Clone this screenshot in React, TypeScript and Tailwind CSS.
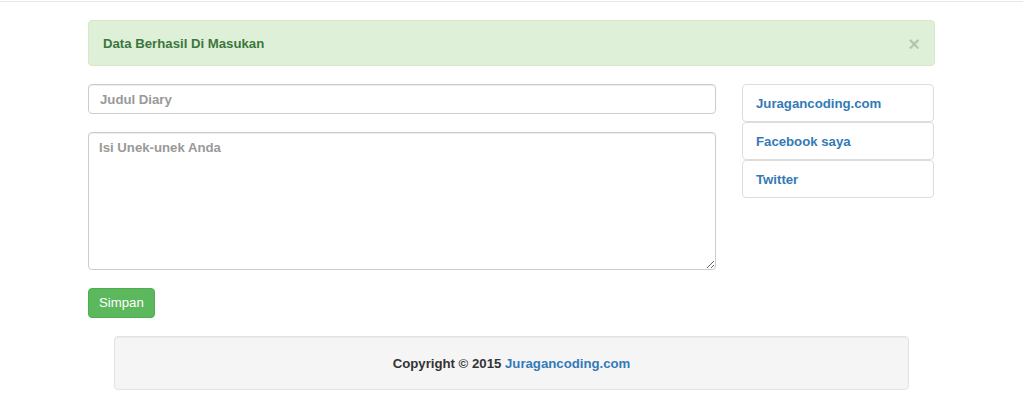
import React from "react";

const links = ["Juragancoding.com", "Facebook saya", "Twitter"];

export default function App() {
  return (
    <div className="min-h-[397px] bg-white font-['Liberation_Sans',Arial,sans-serif] text-[13.2px] font-bold text-[#333]">
      <div className="h-[2px] border-b border-[#e7e7e7]" />

      <div className="mx-auto w-[847px] pt-[18px]">
        {/* Alert */}
        <div className="flex h-[46px] items-center justify-between rounded-[4px] border border-[#d6e9c6] bg-[#dff0d8] pl-[14px] pr-[14px] pt-[2px] text-[#3c763d]">
          <span>Data Berhasil Di Masukan</span>
          <span className="text-[20px] leading-none text-black/20">×</span>
        </div>

        <div className="mt-[18px] flex gap-[26px]">
          {/* Form */}
          <div className="w-[628px]">
            <input
              type="text"
              placeholder="Judul Diary"
              className="block h-[30px] w-full rounded-[4px] border border-[#ccc] px-[11px] font-bold shadow-[inset_0_1px_1px_rgba(0,0,0,0.075)] outline-none placeholder:text-[#999]"
            />
            <textarea
              placeholder="Isi Unek-unek Anda"
              className="mt-[18px] block h-[138px] w-full rounded-[4px] border border-[#ccc] px-[10px] py-[5px] font-bold leading-[20px] shadow-[inset_0_1px_1px_rgba(0,0,0,0.075)] outline-none placeholder:text-[#999]"
            />
            <button className="mt-[18px] h-[30px] rounded-[4px] border border-[#4cae4c] bg-[#5cb85c] px-[10px] font-normal text-white">
              Simpan
            </button>
          </div>

          {/* Links */}
          <div className="flex w-[192px] flex-col">
            {links.map((l) => (
              <a
                key={l}
                href="#"
                className="flex h-[38px] items-center rounded-[4px] border border-[#ddd] pl-[13px] pt-[2px] text-[#337ab7]"
              >
                {l}
              </a>
            ))}
          </div>
        </div>

        {/* Footer */}
        <div className="mx-auto mt-[18px] flex h-[54px] w-[795px] items-center justify-center rounded-[4px] border border-[#e3e3e3] bg-[#f5f5f5] pt-[2px] shadow-[inset_0_1px_1px_rgba(0,0,0,0.05)]">
          <span>
            Copyright © 2015 <a href="#" className="text-[#337ab7]">Juragancoding.com</a>
          </span>
        </div>
      </div>
    </div>
  );
}
